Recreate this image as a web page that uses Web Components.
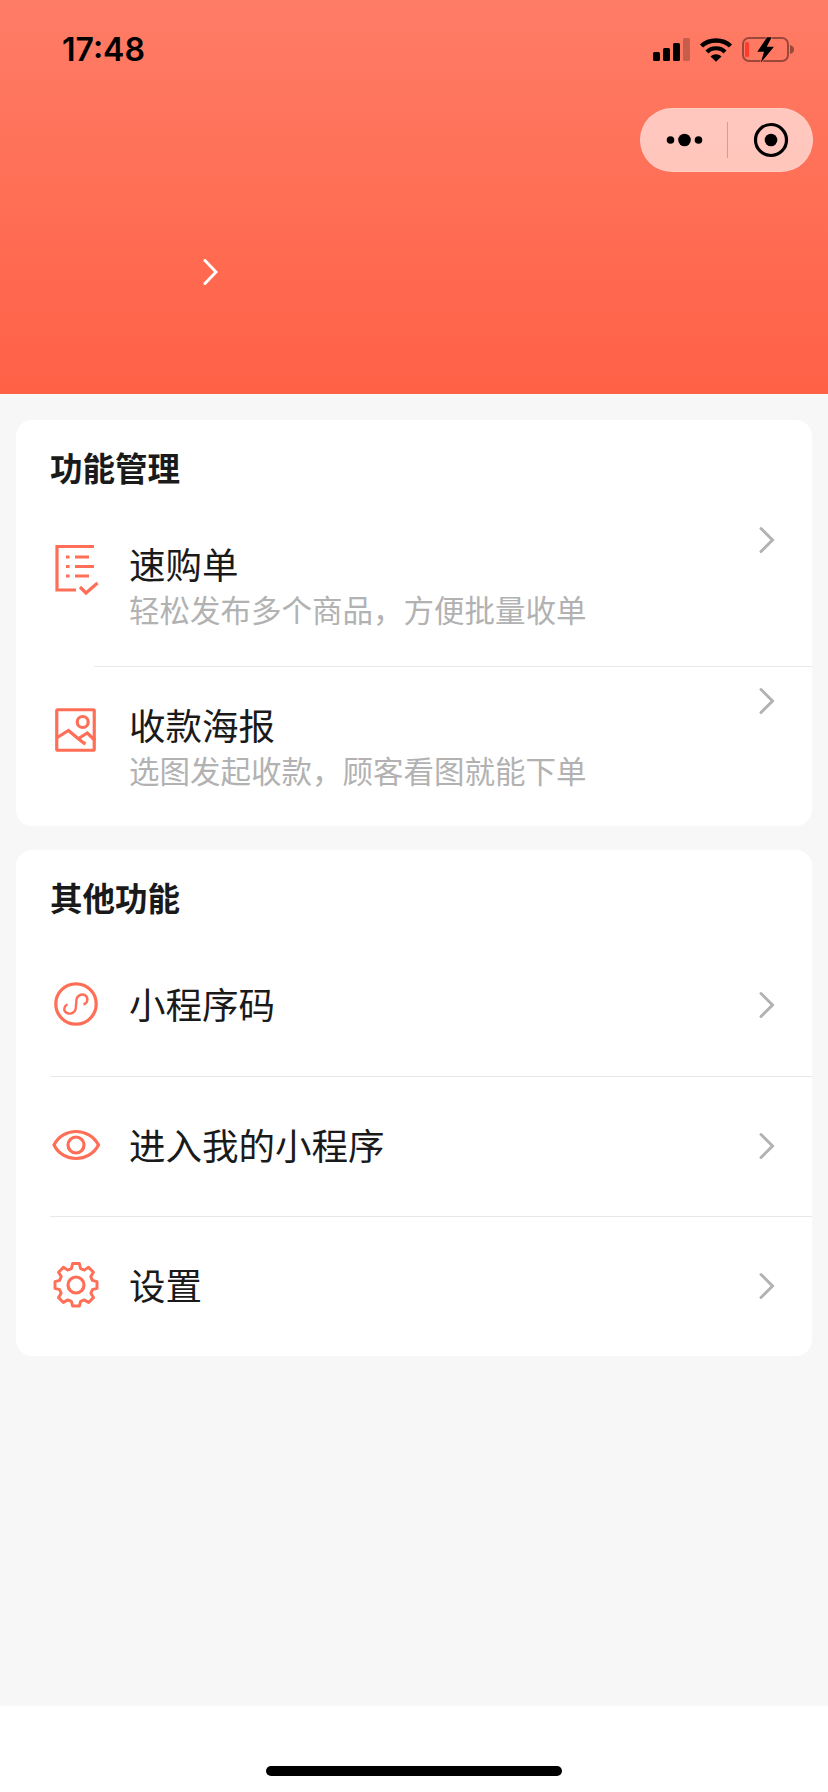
<!DOCTYPE html>
<html lang="zh">
<head>
<meta charset="utf-8">
<title>管理</title>
<style>
html, body { margin: 0; padding: 0; }
body {
  width: 828px;
  height: 1792px;
  overflow: hidden;
  font-family: "Noto Sans CJK SC", "Noto Sans", sans-serif;
}
</style>
</head>
<body>
<app-page>
  <page-header></page-header>
  <app-card heading="功能管理">
    <menu-row label="速购单" sub="轻松发布多个商品，方便批量收单" icon="list"></menu-row>
    <row-line inset="78"></row-line>
    <menu-row label="收款海报" sub="选图发起收款，顾客看图就能下单" icon="poster"></menu-row>
  </app-card>
  <app-card heading="其他功能">
    <menu-row label="小程序码" icon="mini"></menu-row>
    <row-line inset="34"></row-line>
    <menu-row label="进入我的小程序" icon="eye"></menu-row>
    <row-line inset="34"></row-line>
    <menu-row label="设置" icon="gear"></menu-row>
  </app-card>
  <home-bar slot="bottom"></home-bar>
</app-page>

<script>
class AppPage extends HTMLElement {
    constructor() {
        super()
        this.attachShadow({ mode: 'open' }).innerHTML = `
<style>
:host {
  display: flex;
  flex-direction: column;
  height: 1792px;
  background: #f7f7f7;
}
.cards {
  flex: 1;
  display: flex;
  flex-direction: column;
  gap: 24px;
}
</style>
<slot name="top"></slot>
<div class="cards"><slot></slot></div>
<slot name="bottom"></slot>
`
    }
    connectedCallback() {
        this.querySelector('page-header').slot = 'top'
    }
}

class PageHeader extends HTMLElement {
    constructor() {
        super()
        this.attachShadow({ mode: 'open' }).innerHTML = `
<style>
:host {
  display: block;
  height: 394px;
  margin-bottom: 26px;
  background: linear-gradient(180deg, #ff7c66 0%, #ff6146 100%);
}
.status {
  display: flex;
  justify-content: space-between;
  align-items: center;
  padding: 32px 32px 0 62px;
  height: 36px;
}
.time {
  font: 600 32px/36px Inter, "Liberation Sans", sans-serif;
  letter-spacing: 0;
  color: #000;
}
.icons { display: flex; }
.capsule-row {
  display: flex;
  justify-content: flex-end;
  padding: 40px 15px 0 0;
}
.capsule {
  display: flex;
  align-items: center;
  box-sizing: border-box;
  width: 173px;
  height: 64px;
  border-radius: 32px;
  background: rgba(255, 255, 255, 0.6);
  border: 1px solid rgba(255, 255, 255, 0.15);
}
.capsule svg { display: block; }
.sep { width: 1px; height: 36px; background: rgba(0, 0, 0, 0.2); }
.more { margin-left: 25px; margin-right: 24px; }
.dot { margin-left: 25px; }
.name {
  display: flex;
  padding: 87px 0 0 203px;
}
</style>
<div class="status">
  <span class="time">17:48</span>
  <span class="icons">
    <svg width="146" height="36" viewBox="0 0 146 36">
      <!-- signal -->
      <rect x="3" y="20" width="7" height="9" rx="1.500" fill="#000"/>
      <rect x="13" y="16" width="7" height="13" rx="1.500" fill="#000"/>
      <rect x="23" y="11" width="7" height="18" rx="1.500" fill="#000"/>
      <rect x="33" y="6" width="7" height="23" rx="1.500" fill="#000" fill-opacity=".22"/>
      <!-- wifi -->
      <path d="M51.500 14 C59 6.500 73 6.500 80.500 14" fill="none" stroke="#000" stroke-width="4.500"/>
      <path d="M57 20 C61.500 15 70.500 15 75 20" fill="none" stroke="#000" stroke-width="4.200"/>
      <path d="M60.500 24.500 L66 29.800 L71.500 24.500 C68 21.500 64 21.500 60.500 24.500 Z" fill="#000"/>
      <!-- battery -->
      <rect x="93" y="6" width="45" height="23" rx="6" fill="none" stroke="#000" stroke-opacity=".4" stroke-width="2"/>
      <rect x="95" y="10" width="4" height="15" rx="1.500" fill="#ff3b30"/>
      <path d="M140 13 C143 13.500 144 15.500 144 17.500 C144 19.500 143 21.500 140 22 Z" fill="#000" fill-opacity=".4"/>
      <path d="M117 5.300 L107.300 19.700 L114 19.700 L110.700 30.700 L124 14.700 L116.700 14.700 L121.700 5.300 Z" fill="#000" stroke="#ff7b65" stroke-width="1.500" paint-order="stroke"/>
    </svg>
  </span>
</div>
<div class="capsule-row">
  <div class="capsule">
    <svg class="more" width="37" height="14" viewBox="0 0 37 14">
      <circle cx="4.500" cy="7" r="3.800" fill="#000"/>
      <circle cx="18.500" cy="7" r="6.300" fill="#000"/>
      <circle cx="32.500" cy="7" r="3.800" fill="#000"/>
    </svg>
    <span class="sep"></span>
    <svg class="dot" width="36" height="36" viewBox="0 0 36 36">
      <circle cx="18" cy="18" r="15.500" fill="none" stroke="#000" stroke-width="3.200"/>
      <circle cx="18" cy="18" r="6.300" fill="#000"/>
    </svg>
  </div>
</div>
<div class="name">
  <svg width="15" height="26" viewBox="0 0 15 26">
    <path d="M2 1.500 L13 13 L2 24.500" fill="none" stroke="#fff" stroke-width="3" stroke-linecap="round"/>
  </svg>
</div>
`
    }
}

class AppCard extends HTMLElement {
    constructor() {
        super()
        this.attachShadow({ mode: 'open' }).innerHTML = `
<style>
:host {
  display: block;
  margin: 0 16px;
  background: #fff;
  border-radius: 16px;
  overflow: hidden;
}
h2 {
  margin: 0;
  height: 86px;
  box-sizing: border-box;
  padding: 23px 0 0 34px;
  font-size: 32.5px;
  line-height: 48px;
  font-weight: 700;
  color: #1a1a1a;
}
</style>
<h2></h2>
<slot></slot>
`
        this.shadowRoot.querySelector('h2').textContent = this.getAttribute('heading')
    }
}

class RowLine extends HTMLElement {
    constructor() {
        super()
        this.attachShadow({ mode: 'open' }).innerHTML = `
<style>
:host {
  display: block;
  height: 1px;
  margin-left: var(--inset, 0);
  background: #e8e8e8;
}
</style>
`
        this.style.setProperty('--inset', `${this.getAttribute('inset')}px`)
    }
}

class MenuRow extends HTMLElement {
    static icons = {
        list: `
<path d="M44 2.500 H7 V46 H26" />
<path d="M16 13 H19.500 M16 22.500 H19.500 M16 32 H19.500" />
<path d="M25 13 H39 M25 22.500 H44 M25 32 H39" />
<path d="M30 43 L36 49 L47.500 39" />`,
        poster: `
<rect x="6.750" y="4.750" width="37.500" height="40.500" rx="1" />
<circle cx="32.700" cy="17" r="5.500" />
<path d="M6.500 33 L18.500 25.500 L28 33.500 Q32 37 35.500 39" />
<path d="M29.300 33 L37.300 28 L45 35.500" />`,
        mini: `
<circle cx="26" cy="24" r="20.200" />
<path style="stroke-width:2.400" d="M17.500 24.300 C14 25.500 13.500 30.500 15.500 32 C19 35 24.500 33.500 25.700 29 L26.500 19.500 C27 15.500 32 13 35.500 15.500 C38.500 18 38 23 33.500 24.500" />`,
        eye: `
<path d="M4 24 C13 6 39 6 48.500 24 C39 42 13 42 4 24 Z" />
<circle cx="26" cy="24" r="8" />`,
        gear: `
<path style="stroke-width:3.500;stroke-linejoin:round" d="M22 2.500 H30 L31.500 8.500 L35.800 10.300 L41 7 L46.800 12.800 L43.600 18 L45.500 22.500 L51 24 V32 L45.500 33.500 L43.700 37.800 L46.800 43 L41 48.800 L35.800 45.700 L31.500 47.500 L30 53 H22 L20.500 47.500 L16.200 45.700 L11 48.800 L5.200 43 L8.300 37.800 L6.500 33.500 L1 32 V24 L6.500 22.500 L8.400 18 L5.200 12.800 L11 7 L16.200 10.300 L20.500 8.500 Z" transform="translate(4.160 .48) scale(.84)" />
<circle cx="26" cy="24" r="8" />`,
    }

    constructor() {
        super()
        const sub = this.getAttribute('sub')
        this.attachShadow({ mode: 'open' }).innerHTML = `
<style>
:host {
  display: flex;
  align-items: center;
  height: ${sub ? 159 : 139}px;
  padding-left: 34px;
}
:host(:first-child) { height: ${sub ? 160 : 140}px; }
.ico {
  display: block;
  flex: none;
  margin-right: 27px;
  align-self: ${sub ? 'flex-start' : 'center'};
  margin-top: ${sub ? 38 : 0}px;
}
.ico * {
  fill: none;
  stroke: #ff6e56;
  stroke-width: 3.2;
}
.text { flex: 1; min-width: 0; padding-bottom: ${sub ? 0 : 6}px; }
.label {
  font-size: 36.5px;
  line-height: 46px;
  margin: 1px 0 -1px;
  color: #1a1a1a;
}
.sub {
  font-size: 30.5px;
  line-height: 46px;
  color: #b2b2b2;
}
.arrow {
  flex: none;
  margin-right: 36px;
  align-self: ${sub ? 'flex-start' : 'center'};
  margin-top: ${sub ? 20 : 0}px;
  margin-bottom: ${sub ? 0 : 2}px;
}
</style>
<svg class="ico" width="52" height="52" viewBox="0 0 52 52">${MenuRow.icons[this.getAttribute('icon')]}</svg>
<div class="text">
  <div class="label"></div>
  ${sub ? '<div class="sub"></div>' : ''}
</div>
<svg class="arrow" width="18" height="28" viewBox="0 0 18 28">
  <path d="M3 2.500 L14.500 14 L3 25.500" fill="none" stroke="#b2b2b2" stroke-width="3" stroke-linecap="round"/>
</svg>
`
        this.shadowRoot.querySelector('.label').textContent = this.getAttribute('label')
        if (sub) this.shadowRoot.querySelector('.sub').textContent = sub
    }
}

class HomeBar extends HTMLElement {
    constructor() {
        super()
        this.attachShadow({ mode: 'open' }).innerHTML = `
<style>
:host {
  display: flex;
  justify-content: center;
  height: 86px;
  box-sizing: border-box;
  padding-top: 60px;
  background: #fff;
}
div { width: 296px; height: 10px; border-radius: 5px; background: #000; }
</style>
<div></div>
`
    }
}

customElements.define('app-page', AppPage)
customElements.define('page-header', PageHeader)
customElements.define('app-card', AppCard)
customElements.define('row-line', RowLine)
customElements.define('menu-row', MenuRow)
customElements.define('home-bar', HomeBar)
</script>
</body>
</html>
